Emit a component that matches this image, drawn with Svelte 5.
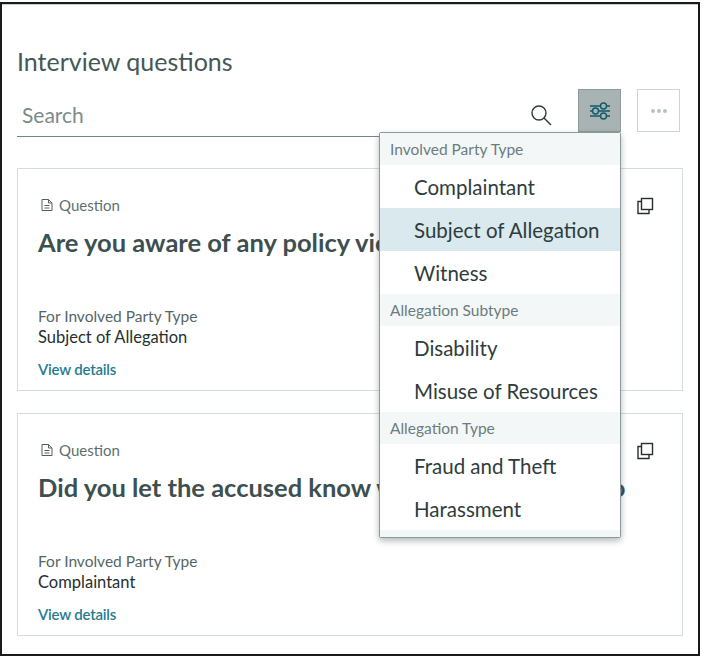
<script>
  const groups = [
    { label: 'Involved Party Type', items: ['Complaintant', 'Subject of Allegation', 'Witness'] },
    { label: 'Allegation Subtype', items: ['Disability', 'Misuse of Resources'] },
    { label: 'Allegation Type', items: ['Fraud and Theft', 'Harassment'] }
  ];
  const cards = [
    { q: 'Are you aware of any policy violations?', party: 'Subject of Allegation' },
    { q: 'Did you let the accused know what you intend to do', party: 'Complaintant' }
  ];
</script>

<div class="frame">
  <div class="inner">
    <h1>Interview questions</h1>
    <div class="toolbar">
      <div class="field">
        <span class="placeholder">Search</span>
        <svg class="search" width="22" height="22" viewBox="0 0 22 22" fill="none" stroke="#2f3b3b" stroke-width="1.4">
          <circle cx="9" cy="9" r="7" />
          <path d="M14 14l7 7" />
        </svg>
        <div class="filter">
          <svg width="22" height="18" viewBox="0 0 22 18" fill="none" stroke="#0f5b6b" stroke-width="1.4">
            <path d="M1 4h10M18 4h3M1 9h2M10 9h11M1 14h10M18 14h3" />
            <circle cx="14.5" cy="4" r="3" />
            <circle cx="6.500" cy="9" r="3" />
            <circle cx="14.5" cy="14" r="3" />
          </svg>
        </div>
      </div>
      <div class="more"><i></i><i></i><i></i></div>
    </div>

    <div class="menu">
      {#each groups as g}
        <div class="group">{g.label}</div>
        {#each g.items as item}
          <div class="item" class:active={item === 'Subject of Allegation'}>{item}</div>
        {/each}
      {/each}
      <div class="foot"></div>
    </div>

    {#each cards as c}
      <section class="card">
        <div class="kind">
          <svg width="14" height="14" viewBox="0 0 14 14" fill="none" stroke="#4f5f5f" stroke-width="1">
            <path d="M2 1.5h6.5l3.5 3.5v7.5H2zM8.500 1.500V5H12M4.500 7.500h5M4.500 10h5" />
          </svg>
          <span>Question</span>
        </div>
        <svg class="copy" width="18" height="18" viewBox="0 0 18 18" fill="none" stroke="#27302f" stroke-width="1.400">
          <rect x="5.500" y="1.500" width="11" height="11" />
          <path d="M5.500 4.500H2v12h11v-4" />
        </svg>
        <h2>{c.q}</h2>
        <div class="lbl">For Involved Party Type</div>
        <div class="val">{c.party}</div>
        <div class="link">View details</div>
      </section>
    {/each}
  </div>
</div>

<style>
  :global(body) {
    margin: 0;
    background: #fff;
  }
  .frame {
    box-sizing: border-box;
    width: 700px;
    height: 654px;
    margin-top: 2px;
    border: 2px solid #1a1a1a;
    font-family: Lato, "Noto Sans", sans-serif;
  }
  .inner {
    position: relative;
    box-sizing: border-box;
    height: 100%;
    padding: 0 15px;
    border-top: 1px solid #c9d2d2;
  }
  h1 {
    margin: 0;
    padding-top: 37px;
    font-size: 25px;
    line-height: 38px;
    font-weight: 400;
    color: #455757;
  }
  .toolbar {
    display: flex;
    gap: 17px;
    margin-top: 9px;
    padding-right: 3px;
  }
  .field {
    flex: 1;
    height: 47px;
    display: flex;
    align-items: flex-start;
    border-bottom: 1.500px solid #73878a;
  }
  .placeholder {
    flex: 1;
    padding: 12px 0 0 5px;
    font-size: 21px;
    line-height: 28px;
    color: #7b8b8c;
  }
  .search {
    margin: 15px 26px 0 0;
  }
  .filter {
    box-sizing: border-box;
    width: 43px;
    height: 43px;
    margin-right: -1px;
    display: flex;
    align-items: center;
    justify-content: center;
    background: #a9b3b4;
    border: 1.500px solid #8c9a9b;
  }
  .more {
    box-sizing: border-box;
    width: 43px;
    height: 43px;
    display: flex;
    align-items: center;
    justify-content: center;
    gap: 2px;
    border: 1.500px solid #ccd4d4;
  }
  .more i {
    width: 4px;
    height: 4px;
    border-radius: 50%;
    background: #b9c2c2;
  }
  .menu {
    position: absolute;
    z-index: 2;
    left: 377px;
    top: 127px;
    box-sizing: border-box;
    width: 242px;
    background: #fff;
    border: 1.500px solid #8a9a9c;
    border-radius: 2px;
    box-shadow: 0 3px 6px rgba(40, 60, 60, 0.35);
  }
  .group {
    box-sizing: border-box;
    height: 32px;
    padding-left: 10px;
    line-height: 33px;
    font-size: 15.500px;
    color: #6b7d7e;
    background: #f4f7f7;
  }
  .item {
    box-sizing: border-box;
    height: 43px;
    padding-left: 34px;
    line-height: 44px;
    font-size: 20.500px;
    color: #2f3c3c;
  }
  .item.active {
    background: #d9e9ee;
  }
  .foot {
    height: 7px;
    background: #f4f7f7;
  }
  .card {
    position: relative;
    box-sizing: border-box;
    height: 223px;
    margin-top: 22px;
    padding: 26px 20px 0 20px;
    border: 1.500px solid #d5dcdc;
    width: 666px;
  }
  .toolbar + .menu + .card {
    margin-top: 31px;
  }
  .kind {
    display: flex;
    align-items: center;
    gap: 5px;
    padding-left: 2px;
    font-size: 15px;
    line-height: 20px;
    color: #5e6f70;
  }
  .copy {
    position: absolute;
    top: 28px;
    right: 28px;
  }
  h2 {
    margin: 9px 0 0;
    font-size: 25.500px;
    line-height: 36px;
    font-weight: 700;
    color: #3e4f4f;
    white-space: nowrap;
  }
  .lbl {
    margin-top: 46px;
    font-size: 15.500px;
    line-height: 21px;
    color: #566667;
  }
  .val {
    font-size: 16.500px;
    line-height: 21px;
    color: #26302f;
  }
  .link {
    margin-top: 11px;
    font-size: 15px;
    line-height: 21px;
    font-weight: 600;
    letter-spacing: -0.2px;
    color: #1f7c90;
  }
</style>
